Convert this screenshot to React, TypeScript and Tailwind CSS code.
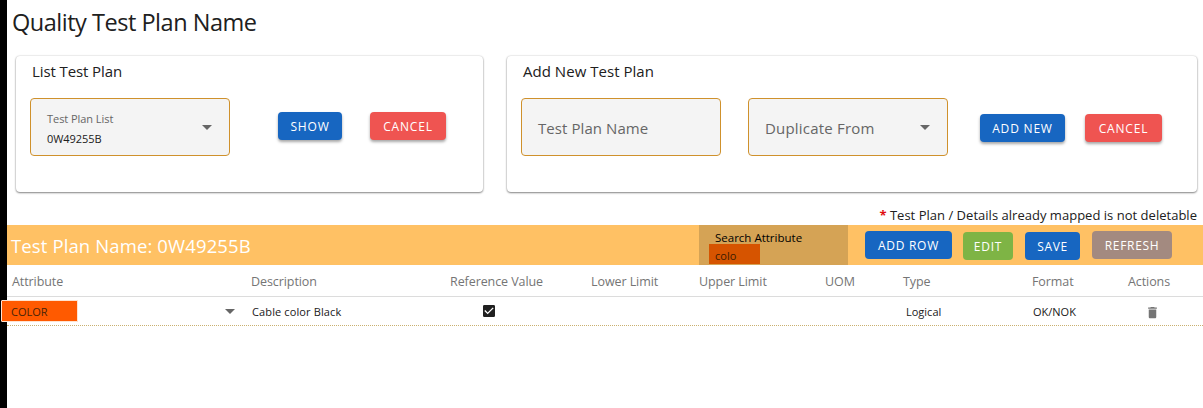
import type { ReactNode } from "react";
import { MdArrowDropDown, MdCheckBox, MdDelete } from "react-icons/md";

function Button({ className, children }: { className: string; children: ReactNode }) {
  return (
    <button
      type="button"
      className={`flex h-7 shrink-0 items-center justify-center whitespace-nowrap rounded pt-[2px] text-[12px] text-white ${className}`}
    >
      {children}
    </button>
  );
}

const raised = "shadow-[0_2px_3px_rgba(0,0,0,0.35)]";

function Panel({ title, className, children }: { title: ReactNode; className: string; children: ReactNode }) {
  return (
    <section
      className={`h-[136px] rounded bg-white shadow-[0_1px_2px_rgba(0,0,0,0.45),0_0_2px_rgba(0,0,0,0.2)] ${className}`}
    >
      <h2 className="flex h-[42px] items-center pb-3 pl-4 text-[15px]">{title}</h2>
      <div className="flex">{children}</div>
    </section>
  );
}

const field = "flex h-[58px] w-[200px] shrink-0 items-center rounded border border-[#cf912c] bg-[#f4f4f4]";

export default function App() {
  return (
    <div className="flex h-[408px] w-[1203px] overflow-hidden bg-white font-['Open_Sans','Noto_Sans',sans-serif] text-[#202020]">
      <div className="w-[7px] shrink-0 bg-black" />
      <main className="flex w-[1196px] flex-col">
        <h1 className="h-14 whitespace-nowrap pl-[5px] pt-[6px] text-[23.5px] leading-[32px] tracking-[-0.48px]">
          Quality Test Plan Name
        </h1>

        <div className="flex gap-6 pl-[9px]">
          <Panel className="w-[467px]" title={<span className="tracking-[-0.1px]">List Test Plan</span>}>
            <div className={`${field} ml-[14px] justify-between pl-4 pr-[10px]`}>
              <div className="flex flex-col pt-1">
                <span className="text-[11px] leading-[20px] tracking-[-0.05px] text-[#666]">Test Plan List</span>
                <span className="text-[11px] leading-[20px] tracking-[-0.05px]">0W49255B</span>
              </div>
              <MdArrowDropDown size={24} className="text-[#666]" />
            </div>
            <Button className={`ml-12 mt-[14px] w-16 bg-[#1766c1] tracking-[0.8px] ${raised}`}>SHOW</Button>
            <Button className={`ml-7 mt-[14px] w-[76px] bg-[#ef5451] tracking-[0.8px] ${raised}`}>CANCEL</Button>
          </Panel>
          <Panel className="w-[690px]" title={<span className="tracking-[0.03px]">Add New Test Plan</span>}>
            <div className={`${field} ml-[14px] pl-4 pt-[2px] text-[15px] tracking-[0.07px] text-[#666]`}>
              <span>Test Plan Name</span>
            </div>
            <div className={`${field} ml-[27px] justify-between pl-4 pr-[10px] text-[15px] tracking-[0.2px] text-[#666]`}>
              <span className="pt-[2px]">Duplicate From</span>
              <MdArrowDropDown size={24} />
            </div>
            <Button className={`ml-8 mt-4 w-[85px] bg-[#1766c1] tracking-[0.8px] ${raised}`}>ADD NEW</Button>
            <Button className={`ml-5 mt-4 w-[77px] bg-[#ef5451] tracking-[0.8px] ${raised}`}>CANCEL</Button>
          </Panel>
        </div>

        <p className="h-[33px] whitespace-nowrap pr-[6px] pt-[13px] text-right text-[13px] leading-[20px] tracking-[0.02px]">
          <span className="font-bold text-[#e01010]">*</span> Test Plan / Details already mapped is not deletable
        </p>

        <div className="flex h-10 bg-[#ffc164]">
          <div className="w-[692px] whitespace-nowrap pl-1 pt-[6px] text-[18.5px] leading-[30px] tracking-[0.12px] text-white">
            Test Plan Name: 0W49255B
          </div>
          <div className="flex w-[149px] flex-col bg-[#d5a355] text-black">
            <span className="whitespace-nowrap pl-4 pt-[3px] text-[11.5px] leading-[19px]">Search Attribute</span>
            <span className="-mt-[3px] ml-[10px] h-5 w-[51px] bg-[#d65400] pl-[6px] text-[11px] leading-[23px] text-[#3b1c00]">
              colo
            </span>
          </div>
          <Button className="ml-[17px] mt-[6px] w-[87px] bg-[#1766c1] tracking-[0.7px]">ADD ROW</Button>
          <Button className="ml-[11px] mt-[7px] w-[50px] bg-[#7eb445] tracking-[0.8px]">EDIT</Button>
          <Button className="ml-3 mt-[7px] w-[55px] bg-[#1766c1] tracking-[0.6px]">SAVE</Button>
          <Button className="ml-3 mt-[6px] w-20 bg-[#a38a80] tracking-[0.7px]">REFRESH</Button>
        </div>

        <div className="grid h-8 grid-cols-[239px_199px_141px_108px_126px_78px_129px_96px_80px] whitespace-nowrap border-b border-[#dcdcdc] pl-[5px] pt-[1px] text-[12.5px] leading-[31px] tracking-[-0.08px] text-[#757575]">
          <span>Attribute</span>
          <span>Description</span>
          <span>Reference Value</span>
          <span>Lower Limit</span>
          <span>Upper Limit</span>
          <span>UOM</span>
          <span>Type</span>
          <span>Format</span>
          <span>Actions</span>
        </div>

        <div className="grid h-[29px] grid-cols-[245px_231px_423px_127px_170px] whitespace-nowrap border-b border-dotted border-[#c9b070] text-[11px] leading-[30px]">
          <div className="flex items-start justify-between pr-[10px]">
            <span className="-ml-[6px] mt-[3px] h-[22px] w-[77px] rounded-[1px] border border-[#ffe3d0] bg-[#ff5a00] pl-[9px] leading-[21px] text-[#4a2408]">
              COLOR
            </span>
            <MdArrowDropDown size={24} className="mt-[2px] text-[#666]" />
          </div>
          <span className="tracking-[0.12px]">Cable color Black</span>
          <MdCheckBox size={16} className="-ml-[2px] mt-[6px] text-[#202020]" />
          <span>Logical</span>
          <div className="flex justify-between pr-[43px]">
            <span>OK/NOK</span>
            <MdDelete size={15} className="mt-2 text-[#757575]" />
          </div>
        </div>
      </main>
    </div>
  );
}
